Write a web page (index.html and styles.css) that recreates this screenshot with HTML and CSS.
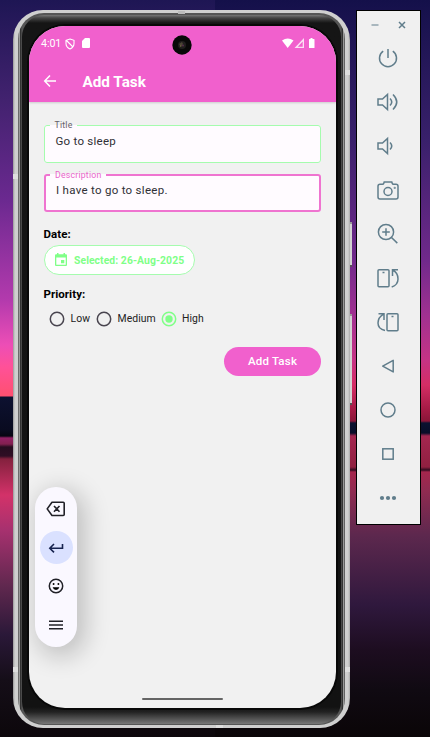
FILE: index.html
```html
<!DOCTYPE html>
<html lang="en">
<head>
<meta charset="utf-8">
<title>Add Task</title>
<link rel="stylesheet" href="styles.css">
</head>
<body>
<main class="desktop">
  <div class="phone">
    <i class="side-key volume"></i><i class="side-key power"></i>
    <i class="seam s1"></i><i class="seam s2"></i><i class="seam s3"></i><i class="seam s4"></i><i class="seam s5"></i><i class="seam s6"></i>
    <div class="rim"><div class="bezel"><div class="glass"><div class="screen">
      <header class="top">
        <div class="status">
          <span class="time">4:01</span>
          <svg class="shield" width="10" height="12" viewBox="0 0 10 12"><path d="M5 1 9 2.3V5.6C9 8 7.5 10 5 11 2.5 10 1 8 1 5.6V2.3zM1.5 2.5 8 9" fill="none" stroke="#fff" stroke-width="1.1"/></svg>
          <svg class="sd" width="8" height="10" viewBox="0 0 8 10"><path d="M3 0H7Q8 0 8 1V9Q8 10 7 10H1Q0 10 0 9V3z" fill="#fff"/></svg>
          <svg class="signals" width="34" height="11" viewBox="0 0 34 11"><g fill="#fff"><path d="M0 2.5Q5.7-1.5 11.5 2.5L5.7 10z"/><path d="M22 0V10H12.5zM20.700 3.500 15.800 8.700H20.700z" fill-rule="evenodd" opacity=".8"/><path d="M28.500 0h2v1H32q.5 0 .5.500V9.500q0 .5-.5.500H27.500q-.5 0-.5-.5V1.500q0-.5.5-.5h1z"/></g></svg>
          <svg class="camera-hole" width="20" height="20" viewBox="0 0 20 20"><circle cx="10" cy="10" r="9.700" fill="#080808"/><circle cx="10" cy="10" r="4" fill="#1f1e1d"/><path d="M7 9l3-2 1 2-2 3z" fill="#4b4335"/><circle cx="11" cy="10.500" r="1" fill="#542f4c"/><circle cx="8.500" cy="11" r=".8" fill="#746640"/></svg>
        </div>
        <div class="appbar">
          <svg width="14" height="14" viewBox="0 0 14 14"><path d="M13 7H2M7 1.500 1.700 7 7 12.500" fill="none" stroke="#fff" stroke-width="1.500"/></svg>
          <h1>Add Task</h1>
        </div>
      </header>
      <section class="form">
        <fieldset class="field title"><legend>Title</legend><p>Go to sleep</p></fieldset>
        <fieldset class="field description"><legend>Description</legend><p>I have to go to sleep.</p></fieldset>
        <h2 class="date-label">Date:</h2>
        <div class="date">
          <svg width="12" height="13" viewBox="0 0 12 13"><path d="M2 0h1.500v1.200h5V0H10v1.200h1q1 0 1 1V12q0 1-1 1H1q-1 0-1-1V2.200q0-1 1-1h1zM1.300 4.400v7.300h9.400V4.400zM6 7h3.300v3.300H6z" fill="#80ff88" fill-rule="evenodd"/></svg>
          <span>Selected: 26-Aug-2025</span>
        </div>
        <h2 class="priority-label">Priority:</h2>
        <div class="radios">
          <svg class="radio" viewBox="0 0 16 16"><circle cx="8" cy="8" r="6.700"/></svg><span class="low">Low</span>
          <svg class="radio" viewBox="0 0 16 16"><circle cx="8" cy="8" r="6.700"/></svg><span class="medium">Medium</span>
          <svg class="radio on" viewBox="0 0 16 16"><circle cx="8" cy="8" r="6.700"/><circle class="dot" cx="8" cy="8" r="3.700"/></svg><span>High</span>
        </div>
        <div class="submit">Add Task</div>
      </section>
      <div class="keyboard">
        <span><svg width="20" height="18" viewBox="0 0 20 18"><path d="M6 2.200H17.200Q18.200 2.200 18.200 3.200V14.500Q18.200 15.500 17.200 15.500H6L1.200 8.900zM8 6l5.500 5.700M13.500 6 8 11.700" fill="none" stroke="#202027" stroke-width="1.600" stroke-linejoin="round"/></svg></span>
        <span class="enter"><svg width="16" height="12" viewBox="0 0 16 12"><path d="M14.500 2V6.200H2M6 2 1.800 6.200 6 10.400" fill="none" stroke="#17234f" stroke-width="1.600"/></svg></span>
        <span><svg width="16" height="16" viewBox="0 0 16 16"><circle cx="8" cy="8" r="6.700" fill="none" stroke="#202027" stroke-width="1.500"/><circle cx="5.600" cy="6" r=".95"/><circle cx="10.400" cy="6" r=".95"/><path d="M4.600 9.300h6.800Q10.500 11.900 8 11.900T4.600 9.300z"/></svg></span>
        <span><svg width="14" height="10" viewBox="0 0 14 10"><path d="M0 1.200H14M0 5H14M0 8.800H14" stroke="#202027" stroke-width="1.400"/></svg></span>
      </div>
      <i class="home"></i>
    </div></div></div></div>
  </div>
  <aside class="tools">
    <div class="window"><svg width="8" height="8" viewBox="0 0 8 8"><path d="M.5 4h7" opacity=".65"/></svg><svg width="8" height="8" viewBox="0 0 8 8"><path d="M1 1l6 6M7 1 1 7"/></svg></div>
    <span><svg viewBox="0 0 24 24"><path d="M12 3v9M7.200 5.200a8.500 8.500 0 1 0 9.600 0"/></svg></span>
    <span><svg viewBox="0 0 24 24"><path d="M2 9h4.500l5-4.500v15L6.500 15H2zM14 8.500q3.500 3.500 0 7M17 4.500q7.500 7.500 0 15"/></svg></span>
    <span><svg viewBox="0 0 24 24"><path d="M2 9h4.500l5-4.500v15L6.500 15H2zM14 8.500q3.500 3.500 0 7"/></svg></span>
    <span><svg viewBox="0 0 24 24"><path d="M4 6.200h2.500q1 0 1.300-1L8.200 4h7.600l.4 1.200q.3 1 1.300 1H20q2 0 2 2V19q0 2-2 2H4q-2 0-2-2V8.200q0-2 2-2z"/><circle cx="12" cy="13.500" r="4"/><circle cx="18.700" cy="9.900" r=".3"/></svg></span>
    <span><svg viewBox="0 0 24 24"><circle cx="10" cy="10" r="7.600"/><path d="M15.500 15.500l5.800 5.600M10 6.200v7.600M6.200 10h7.600"/></svg></span>
    <span><svg viewBox="0 0 24 24"><rect x="2" y="3.800" width="11" height="17" rx="1"/><path d="M6.500 6.500h2M16.500 10V3.800H22M16.700 4.200Q22 6.500 22 13q0 6-6.300 8"/></svg></span>
    <span><svg viewBox="0 0 24 24"><rect x="11" y="3.800" width="11" height="17" rx="1"/><path d="M15.500 6.500h2M2.500 3.800H8V10M7.500 4.200Q2 7.500 2 13q0 6 7 7.500"/></svg></span>
    <span><svg viewBox="0 0 24 24"><path d="M17.200 6.300v11.600L6.700 12.100z" stroke-linejoin="round"/></svg></span>
    <span><svg viewBox="0 0 24 24"><circle cx="12" cy="12" r="7"/></svg></span>
    <span><svg viewBox="0 0 24 24"><rect x="6.800" y="6.800" width="10.400" height="10.400"/></svg></span>
    <span><svg viewBox="0 0 24 24"><g fill="#607d8b" stroke="none"><circle cx="6" cy="12" r="2.100"/><circle cx="12" cy="12" r="2.100"/><circle cx="18" cy="12" r="2.100"/></g></svg></span>
  </aside>
</main>
</body>
</html>
```
FILE: styles.css
```css
* { box-sizing: border-box; }
body { margin: 0; font-family: Roboto, sans-serif; }
h1, h2, p { margin: 0; }
svg { display: block; flex: none; }
.desktop {
  width: 430px; height: 737px; overflow: hidden;
  display: flex; align-items: flex-start; padding: 10px 9px 0 13px;
  background:
    linear-gradient(#1e1654 0, #42226f 100px, #6b2990 200px, #b33aad 300px, #ed4eb6 345px, #ff5198 367px, #ff5070 396px, #0d1130 397px, #090b20 430px, #060511 436px, #922065 438px, #82204f 444px, #260d20 447px, #300e24 456px, #84213e 459px, #d33269 495px, #a7316f 530px, #61284f 585px, #2a1838 635px, #150e18 680px, #0c070b 737px) left / 50% 100% no-repeat,
    linear-gradient(#14104a 0, #39206b 140px, #70298b 260px, #a03191 315px, #c53385 360px, #d42d65 385px, #a41a44 410px, #8a1638 421px, #0b1230 423px, #080d28 433px, #a32650 436px, #902040 467px, #300c20 470px, #a5264d 472px, #902b51 490px, #5d284e 535px, #2f183d 605px, #1d0d20 650px, #100a12 690px, #0a0507 737px) right / 50% 100% no-repeat;
}
.phone { position: relative; width: 337px; height: 718px; flex: none; }
.rim {
  height: 100%; padding: 3px 5px; border-radius: 30px;
  background: linear-gradient(90deg, #999 0, #cfcfcf 2px, #cfcfcf 335px, #aaa 337px);
}
.bezel {
  height: 100%; padding: 2px 4px 0; border-radius: 26px;
  background: linear-gradient(90deg, #555 0, #999 1.5px, #333 2.5px, #555 4px, #555 323px, #333 324.5px, #999 325.5px, #444 327px);
}
.glass {
  height: 709px; padding: 11px 5px 0 7px; border-radius: 22px;
  background: linear-gradient(#777 0, #444 3px, #151515 8px, #121212 692px, #222 697px, #777 709px);
}
.screen {
  position: relative; width: 307px; height: 682px; overflow: hidden;
  border-radius: 36px; background: #f1f1f1; box-shadow: 0 0 0 2px #080808;
}
.seam { position: absolute; background: #dedede; width: 5px; height: 5px; z-index: 1; }
.s1 { left: 0; top: 164px; } .s2 { right: 0; top: 60px; } .s3 { left: 0; top: 657px; }
.s4 { right: 0; top: 657px; } .s5 { left: 165px; top: 1px; width: 7px; height: 3px; background: #bbb; } .s6 { left: 203px; top: 715px; width: 7px; height: 3px; }
.side-key { position: absolute; left: 337px; width: 2px; background: #d2d2d2; border-top: 2px solid #999; border-bottom: 2px solid #555; }
.volume { top: 212px; height: 45px; } .power { top: 304px; height: 91px; }
.top { height: 76px; background: #f160cd; color: #fff; box-shadow: 0 1px 2px #ccc; }
.status { position: relative; height: 35px; padding: 0 21px 0 12px; display: flex; align-items: center; }
.time { font-size: 10.7px; letter-spacing: -.1px; width: 24px; }
.sd { margin-left: 7px; margin-top: -1px; }
.signals { margin-left: auto; margin-right: -1px; margin-top: -1px; }
.camera-hole { position: absolute; left: 143px; top: 9px; }
.appbar { height: 41px; display: flex; align-items: center; padding-left: 14px; }
.appbar svg { margin-top: -1px; }
h1 { margin-left: 25.4px; font-size: 15.3px; font-weight: 700; line-height: 20px; }
.form { padding: 17px 15px 0 14.5px; display: flex; flex-direction: column; }
.field { margin: 0; min-width: 0; padding: 0 0 0 6px; border-radius: 3px; background: #fffbff; color: #303036; }
.field legend { padding: 0 5px; line-height: 12px; font-size: 8.7px; letter-spacing: .22px; }
.field p { padding-left: 6px; font-size: 11.5px; line-height: 16px; letter-spacing: .25px; }
.title { height: 44px; border: 1px solid #a5fcae; padding-left: 5px; }
.title legend { color: #66616a; }
.title p { margin-top: 2px; }
.description { height: 43px; margin-top: 6px; border: 2px solid #ef74d0; padding-left: 4.5px; }
.description legend { color: #e965ca; }
.description p { margin-top: 1px; letter-spacing: .29px; }
h2 { font-size: 11.5px; line-height: 16px; font-weight: 700; letter-spacing: .05px; }
.date-label { margin-top: 14px; }
.date {
  width: 151.5px; height: 30px; margin-top: 3px; padding-left: 10px;
  border: 1px solid #a5fcae; border-radius: 15px; background: #fff;
  display: flex; align-items: center; gap: 7.5px;
  color: #80ff88; font-size: 10.4px; font-weight: 700; letter-spacing: .06px; white-space: nowrap;
}
.date svg { margin-top: -2px; }
.priority-label { margin-top: 11px; }
.radios { display: flex; align-items: center; height: 16px; margin-top: 8.5px; padding-left: 5.5px; font-size: 10.4px; letter-spacing: .08px; color: #222; }
.radio { width: 16px; height: 16px; margin-right: 5.5px; fill: none; stroke: #49454f; stroke-width: 1.5; }
.radio.on { stroke: #80ff88; }
.radio .dot { fill: #80ff88; stroke: none; }
.low { width: 25.5px; } .medium { width: 43px; }
.submit {
  align-self: flex-end; width: 97px; height: 29px; margin-top: 20px; border-radius: 15px;
  background: #f160cd; color: #fff; display: grid; place-items: center;
  font-size: 11.5px; font-weight: 500; letter-spacing: .2px;
}
.keyboard {
  position: absolute; left: 6px; top: 461px; width: 42px; height: 160px; padding: 3px 0 2px;
  border-radius: 21px; background: #faf8ff; box-shadow: 5px 6px 25px 4px rgba(0,0,0,.2);
  display: flex; flex-direction: column; align-items: center;
}
.keyboard span { width: 33px; height: 38.5px; display: grid; place-items: center; }
.keyboard .enter { height: 33px; margin: 2.5px 0 3px; border-radius: 50%; background: #dae1ff; }
.home { position: absolute; left: 113px; bottom: 8px; width: 81px; height: 2.5px; border-radius: 2px; background: #656565; }
.tools {
  flex: none; width: 65px; height: 515px; margin-left: 6px; border: 1px solid #000; background: #f0f0f0;
  display: flex; flex-direction: column; align-items: flex-start;
}
.window { height: 25px; width: 100%; padding: 3px 0 0 14px; display: flex; gap: 19px; align-items: center; }
.tools span { width: 62px; height: 44px; display: grid; place-items: center; }
.tools span svg { width: 24px; height: 24px; }
.tools svg { fill: none; stroke: #607d8b; stroke-width: 1.5; }
```
